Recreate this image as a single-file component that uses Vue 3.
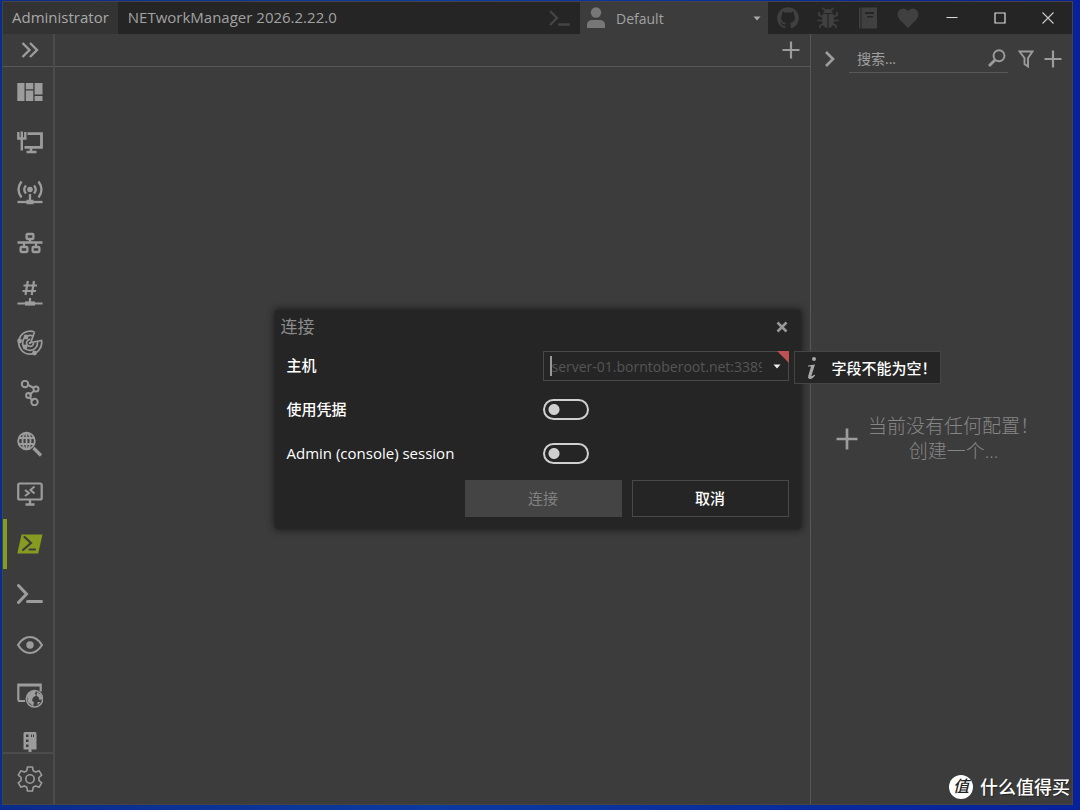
<script setup>
import { ref } from 'vue'

const active = ref('powershell')
const host = ref('')
const search = ref('')
const useCredentials = ref(false)
const adminSession = ref(false)

const tools = [
  { id: 'dashboard', label: 'Dashboard' },
  { id: 'interface', label: 'Network Interface' },
  { id: 'wifi', label: 'WiFi' },
  { id: 'ipscanner', label: 'IP Scanner' },
  { id: 'portscanner', label: 'Port Scanner' },
  { id: 'ping', label: 'Ping Monitor' },
  { id: 'traceroute', label: 'Traceroute' },
  { id: 'dns', label: 'DNS Lookup' },
  { id: 'rdp', label: 'Remote Desktop' },
  { id: 'powershell', label: 'PowerShell' },
  { id: 'putty', label: 'PuTTY' },
  { id: 'vnc', label: 'TigerVNC' },
  { id: 'web', label: 'Web Console' },
  { id: 'snmp', label: 'SNMP' }
]
</script>

<template>
  <div class="desktop">
    <div class="window">
      <header class="titlebar">
        <span class="admin">Administrator</span>
        <h1 class="title">NETworkManager 2026.2.22.0</h1>
        <button class="tb-btn" aria-label="Console">
          <svg width="24" height="24" viewBox="0 0 24 24" class="line"><path d="M2 5l7 7-7 7" stroke-width="2.4" /><path d="M10 18.500h12" stroke-width="2.400" /></svg>
        </button>
        <button class="profile">
          <svg width="20" height="24" viewBox="0 0 20 24" fill="#777"><circle cx="10" cy="6.500" r="5.200" /><path d="M1 22v-3q0-5 6-5h6q6 0 6 5v3z" /></svg>
          <span>Default</span>
          <svg class="arrow" width="8" height="5" viewBox="0 0 8 5" fill="#aaa"><path d="M0.500 0.500h7L4 4.500z" /></svg>
        </button>
        <a class="tb-btn" href="#" aria-label="GitHub">
          <svg width="26" height="26" viewBox="0 0 24 24" fill="currentColor"><path d="M12,2A10,10 0 0,0 2,12C2,16.42 4.87,20.17 8.84,21.5C9.34,21.58 9.5,21.27 9.5,21C9.5,20.77 9.5,20.14 9.5,19.31C6.73,19.91 6.14,17.97 6.14,17.97C5.68,16.81 5.03,16.5 5.03,16.5C4.12,15.88 5.1,15.9 5.1,15.9C6.1,15.97 6.63,16.93 6.63,16.93C7.5,18.45 8.97,18 9.54,17.76C9.63,17.11 9.89,16.67 10.17,16.42C7.95,16.17 5.62,15.31 5.62,11.5C5.62,10.39 6,9.5 6.65,8.79C6.55,8.54 6.2,7.5 6.75,6.15C6.75,6.15 7.59,5.88 9.5,7.17C10.29,6.95 11.15,6.84 12,6.84C12.85,6.84 13.71,6.95 14.5,7.17C16.41,5.88 17.25,6.15 17.25,6.15C17.8,7.5 17.45,8.54 17.35,8.79C18,9.5 18.38,10.39 18.38,11.5C18.38,15.32 16.04,16.16 13.81,16.41C14.17,16.72 14.5,17.33 14.5,18.26C14.5,19.6 14.5,20.68 14.5,21C14.5,21.27 14.66,21.59 15.17,21.5C19.14,20.16 22,16.42 22,12A10,10 0 0,0 12,2Z" /></svg>
        </a>
        <a class="tb-btn" href="#" aria-label="Report a bug">
          <svg width="22" height="22" viewBox="0 0 22 22"><path d="M6.500 6a4.500 4 0 0 1 9 0z" fill="currentColor" /><path d="M5.500 7h4.900v14.300Q5 20 5 14zM16.500 7h-4.900v14.300Q17 20 17 14z" fill="currentColor" /><path d="M8 3L5.500 1M14 3l2.500-2M5.500 10L2 8V5M5 13.500H0.500M6 17l-3 1.500V21M16.500 10L20 8V5M17 13.500h4.500M16 17l3 1.500V21" fill="none" stroke="currentColor" stroke-width="1.700" /></svg>
        </a>
        <a class="tb-btn" href="#" aria-label="Documentation">
          <svg width="22" height="22" viewBox="0 0 22 22" fill="currentColor"><path d="M2 0.500h1.500v21H2z" /><path fill-rule="evenodd" d="M4.500 0.500H20v21H4.500zM8 5v2h9V5zM10 9v1.500h6V9z" /></svg>
        </a>
        <a class="tb-btn" href="#" aria-label="Sponsor">
          <svg width="22" height="22" viewBox="0 0 22 22" fill="currentColor"><path d="M11 21L3 13C-1 9 0 2 6 1.500Q9 1.300 11 4Q13 1.300 16 1.500C22 2 23 9 19 13z" /></svg>
        </a>
        <button class="win-btn" aria-label="Minimize"><svg width="12" height="12" viewBox="0 0 12 12"><path d="M0.500 5.500h11" stroke="#ddd" /></svg></button>
        <button class="win-btn" aria-label="Maximize"><svg width="12" height="12" viewBox="0 0 12 12"><path d="M1 1h10v10H1z" fill="none" stroke="#ddd" stroke-width="1.200" /></svg></button>
        <button class="win-btn" aria-label="Close"><svg width="12" height="12" viewBox="0 0 12 12"><path d="M0.500 0.500l11 11M11.500 0.500l-11 11" stroke="#ccc" stroke-width="1.100" /></svg></button>
      </header>

      <div class="body">
        <nav class="sidebar">
          <button class="expand" aria-label="Expand">
            <svg width="20" height="18" viewBox="0 0 20 18" class="line"><path d="M2.500 2l7 7-7 7M10 2l7 7-7 7" stroke-width="2.400" /></svg>
          </button>
          <div class="tools">
            <button v-for="t in tools" :key="t.id" class="tool" :class="{ active: active === t.id }" :aria-label="t.label" @click="active = t.id">
              <svg width="26" height="26" viewBox="0 0 26 26" class="icon">
                <g v-if="t.id === 'dashboard'" fill="currentColor"><path d="M0.300 4h7.200v18H0.300zM8.800 4h7.500v6.200H8.800zM8.800 11.500h7.500V22H8.800zM17.600 4h7.900v11.500h-7.900zM17.600 17h7.900v5h-7.900z" /></g>
                <g v-else-if="t.id === 'interface'"><path d="M1.300 3v6.500h7V3M4.800 2.500v19" stroke-width="2.400" /><path d="M10.500 4.700h14v13.600H7.500" stroke-width="2.800" /><path d="M14 19v3M9.500 23h10" stroke-width="2.600" /></g>
                <g v-else-if="t.id === 'wifi'"><circle cx="13" cy="10.500" r="2.800" fill="currentColor" stroke="none" /><path d="M9 6.500q-3.500 4 0 8M17 6.500q3.500 4 0 8M4.500 2.500q-6 8 0 16M21.500 2.500q6 8 0 16M13 15v8" stroke-width="2.300" /><path d="M0.500 23H25.500" stroke-width="2.300" /><path d="M9.500 23h7" stroke-width="4.500" /></g>
                <g v-else-if="t.id === 'ipscanner'"><path d="M0.500 12.500h25M13 9v4M7 13v4M19 13v4" stroke-width="2.300" /><rect x="9.600" y="4" width="6.800" height="5" rx="1" stroke-width="2.300" /><rect x="3.600" y="17" width="6.800" height="5" rx="1" stroke-width="2.300" /><rect x="15.600" y="17" width="6.800" height="5" rx="1" stroke-width="2.300" /></g>
                <g v-else-if="t.id === 'portscanner'"><path d="M10.800 1L8.500 15M17 1l-2.300 14M6.500 5.500h13.500M5.500 11H19" stroke-width="2.200" /><path d="M13 18v5M0.500 23.500h25" stroke-width="2.200" /><path d="M8 23.500h10" stroke-width="4.200" /></g>
                <g v-else-if="t.id === 'ping'" stroke-width="1.700"><path d="M17.500 2A11.500 11.500 0 1 0 24.500 10.500L14 12.500M17.500 2L14 12" /><path d="M16 6a7.500 7.500 0 1 0 4.500 6M13.500 9.500a3.500 3.500 0 1 0 3 3" /><g fill="currentColor" stroke="none"><circle cx="2.600" cy="11" r="2.400" /><circle cx="9" cy="7" r="2.400" /><circle cx="8" cy="17" r="2.400" /><circle cx="17.500" cy="23" r="2.400" /><circle cx="13" cy="13" r="1.200" /></g></g>
                <g v-else-if="t.id === 'traceroute'" stroke-width="2"><path d="M11 5l6 3M17 11l-5 4M13 18l3 3" /><circle cx="8" cy="4" r="3.200" /><circle cx="19" cy="9" r="2.500" /><circle cx="11.500" cy="15.500" r="2.400" /><circle cx="17.500" cy="22" r="3.200" /></g>
                <g v-else-if="t.id === 'dns'" stroke-width="1.900"><circle cx="9.500" cy="10" r="8.300" /><ellipse cx="9.500" cy="10" rx="4" ry="8.300" /><path d="M2 7h15M2 13h15M9.500 2v16" /><path d="M16.500 17l7.500 7.500" stroke-width="3.200" /></g>
                <g v-else-if="t.id === 'rdp'"><rect x="1.200" y="2.500" width="23.500" height="16" rx="1.500" stroke-width="2.200" /><path d="M13 19v4M8.500 23.500h9" stroke-width="2.400" /><path d="M8 9l4 3-4 3M17.500 5.500l-4 3.500 4 3.500" stroke-width="2" /></g>
                <g v-else-if="t.id === 'powershell'"><path d="M4.500 3.500h21l-4.300 19H0.300z" fill="currentColor" stroke="none" /><path d="M7.500 6l6.500 6-8 7M12.500 18.500h5.500" stroke="#3c3c3c" stroke-width="2.200" stroke-linecap="round" /></g>
                <g v-else-if="t.id === 'putty'"><path d="M1.500 4.500l8 8.500-8 8.500M10.500 20.500h14" stroke-width="3" stroke-linecap="round" /></g>
                <g v-else-if="t.id === 'vnc'"><path d="M1 13q5-8 12-8t12 8q-5 8-12 8T1 13z" stroke-width="2.100" /><circle cx="13" cy="13" r="3.700" fill="currentColor" stroke="none" /></g>
                <g v-else-if="t.id === 'web'"><path d="M1.300 18.500V2.500h22.400v7M1 3.500h23M1 19h7" stroke-width="2.200" /><circle cx="17.500" cy="16.800" r="8.200" stroke-width="1.500" fill="#3c3c3c" /><path d="M10 13q3-4 7-4.500l2 1-1 2 1 2-3 2-1 3 2 2-1 4-3-3-2-1zM20 10l4 3 1.500 4-3 1-1-3-2-1zM20.500 20l3 0-3 3z" fill="currentColor" stroke="none" /></g>
                <g v-else-if="t.id === 'snmp'"><path fill="currentColor" stroke="none" fill-rule="evenodd" d="M8 0h10q1.500 0 1.500 1.500v16h-13v-16Q6.500 0 8 0zM9 2.500v2.500h2.500V2.500zM9 7.500v2.500h2.500V7.500zM9 12.500v2.500h2.500V12.500zM14 2.500v2.500h1V2.500zM16 2.500v2.500h1V2.500z" /><path d="M13 17v6" stroke-width="3" /></g>
              </svg>
            </button>
          </div>
          <button class="settings" aria-label="Settings">
            <svg width="26" height="26" viewBox="0 0 26 26" class="icon"><path d="M10.500 1h5l0.700 3.700 2.500 1.400 3.500-1.300 2.500 4.300-2.800 2.400v3l2.800 2.400-2.500 4.300-3.500-1.300-2.500 1.400-0.700 3.700h-5l-0.700-3.700-2.500-1.400-3.500 1.300-2.500-4.300 2.800-2.400v-3L1.300 9.100l2.500-4.300 3.500 1.300 2.500-1.400z" stroke-width="1.600" stroke-linejoin="round" /><circle cx="13" cy="13" r="4.200" stroke-width="1.600" /></svg>
          </button>
        </nav>

        <main class="content">
          <div class="tabs">
            <button aria-label="Add tab"><svg width="18" height="18" viewBox="0 0 18 18" class="line"><path d="M9 0.500v17M0.500 9h17" stroke-width="2.200" /></svg></button>
          </div>
        </main>

        <aside class="profiles">
          <div class="search-row">
            <button aria-label="Collapse"><svg width="12" height="18" viewBox="0 0 12 18" class="line"><path d="M2 2l7 7-7 7" stroke-width="2.700" /></svg></button>
            <div class="search">
              <input v-model="search" type="text" placeholder="搜索..." aria-label="搜索" />
              <svg width="18" height="18" viewBox="0 0 18 18" class="line"><circle cx="11" cy="6.800" r="5.500" stroke-width="1.900" /><path d="M7 11l-6 6" stroke-width="2.800" /></svg>
            </div>
            <button aria-label="Filter"><svg width="16" height="18" viewBox="0 0 16 18" class="line"><path d="M1.500 1.500h13L10 8v8.500L6.500 14V8z" stroke-width="1.900" /></svg></button>
            <button aria-label="Add profile"><svg width="18" height="18" viewBox="0 0 18 18" class="line"><path d="M9 0.500v17M0.500 9h17" stroke-width="2.200" /></svg></button>
          </div>
          <button class="empty">
            <svg width="22" height="22" viewBox="0 0 22 22" class="line"><path d="M11 0.500v21M0.500 11h21" stroke-width="2.700" /></svg>
            <span>当前没有任何配置！<br />创建一个...</span>
          </button>
        </aside>

        <div class="overlay">
          <form class="dialog" role="dialog" aria-labelledby="dlg-title" @submit.prevent>
            <div class="dialog-head">
              <h2 id="dlg-title">连接</h2>
              <button type="button" aria-label="Close dialog"><svg width="12" height="12" viewBox="0 0 12 12"><path d="M1.500 1.500l9 9M10.500 1.500l-9 9" stroke="#999" stroke-width="2.500" /></svg></button>
            </div>
            <div class="row host-row">
              <label for="host">主机</label>
              <div class="combo">
                <span class="caret"></span>
                <input id="host" v-model="host" type="text" placeholder="server-01.borntoberoot.net:3389" />
                <button type="button" aria-label="History"><svg width="8" height="5" viewBox="0 0 8 5" fill="#eee"><path d="M0.500 0.500h7L4 4.500z" /></svg></button>
                <span class="corner"></span>
                <div class="tip" role="tooltip">
                  <svg width="14" height="24" viewBox="0 0 14 24" fill="#a8a8a8"><circle cx="9" cy="3" r="2" /><path d="M3 9.500l7-1-3.500 11q-0.500 2 3-1l0.700 0.700Q7 23.500 4.500 23q-2-0.500-1.300-3L6 10.500l-3 0z" /></svg>
                  <span>字段不能为空！</span>
                </div>
              </div>
            </div>
            <div class="row">
              <label for="cred">使用凭据</label>
              <input id="cred" v-model="useCredentials" type="checkbox" class="switch" />
            </div>
            <div class="row">
              <label for="adm">Admin (console) session</label>
              <input id="adm" v-model="adminSession" type="checkbox" class="switch" />
            </div>
            <div class="actions">
              <button type="submit" disabled>连接</button>
              <button type="button" class="cancel">取消</button>
            </div>
          </form>
        </div>
      </div>
    </div>
    <div class="watermark"><span class="badge">值</span><span>什么值得买</span></div>
  </div>
</template>

<style>
body {
  margin: 0;
}
</style>

<style scoped>
.desktop {
  position: relative;
  box-sizing: border-box;
  min-height: 100vh;
  padding: 1px 7px 5px 2px;
  display: flex;
  background: linear-gradient(90deg, #0a2c8c, #0b3aa0 40%, #06219a);
  font-family: "Open Sans", "Noto Sans CJK SC", sans-serif;
  font-size: 14px;
  color: #fff;
}
.desktop * {
  box-sizing: border-box;
}
.window {
  flex: 1;
  display: flex;
  flex-direction: column;
  min-width: 0;
  background: #3c3c3c;
  border: 1px solid #444;
}
button {
  font: inherit;
  color: inherit;
  background: none;
  border: 0;
  padding: 0;
  display: flex;
  align-items: center;
  justify-content: center;
}
svg {
  flex: none;
  display: block;
}
.line {
  fill: none;
  stroke: #9c9c9c;
}
.titlebar {
  display: flex;
  height: 32px;
  background: #252525;
  color: #a2a2a2;
}
.admin {
  padding: 0 9px;
  line-height: 30px;
  font-size: 15px;
  background: #333;
  color: #a8a8a8;
}
.title {
  flex: 1;
  margin: 0;
  padding-left: 10px;
  font-size: 15px;
  font-weight: 400;
  line-height: 31px;
  white-space: nowrap;
}
.tb-btn {
  width: 40px;
  display: flex;
  align-items: center;
  justify-content: center;
  color: #404040;
}
.tb-btn .line {
  stroke: #444;
}
.profile {
  width: 188px;
  justify-content: flex-start;
  gap: 10px;
  padding: 0 7px 0 6px;
  background: #3c3c3c;
  color: #a2a2a2;
}
.arrow {
  margin-left: auto;
}
.win-btn {
  width: 48px;
}
.body {
  position: relative;
  flex: 1;
  display: flex;
}
.sidebar {
  width: 52px;
  display: flex;
  flex-direction: column;
  border-right: 2px solid #4b4b4b;
}
.expand {
  height: 33px;
  padding-left: 3px;
  border-bottom: 1px solid #585858;
}
.tools {
  flex: 1 1 0;
  min-height: 0;
  overflow: hidden;
}
.tool {
  width: 100%;
  height: 50px;
  padding-right: 1px;
  border-left: 4px solid transparent;
  color: #9c9c9c;
}
.tool:nth-child(4n) {
  margin-top: 1px;
}
.tool.active {
  color: #879b21;
  border-left-color: #879b21;
}
.icon {
  fill: none;
  stroke: currentColor;
}
.tool .icon g[fill] {
  stroke: none;
}
.settings {
  height: 52px;
  padding-left: 3px;
  border-top: 2px solid #4b4b4b;
  color: #9c9c9c;
}
.content {
  flex: 1;
  min-width: 0;
}
.tabs {
  height: 33px;
  display: flex;
  justify-content: flex-end;
  padding-right: 10px;
  border-bottom: 1px solid #585858;
}
.profiles {
  width: 262px;
  display: flex;
  flex-direction: column;
  border-left: 1px solid #585858;
}
.search-row {
  height: 39px;
  display: flex;
  gap: 10px;
  padding: 10px 10px 0 13px;
}
.search-row > button:first-child {
  margin-right: 3px;
}
.search {
  flex: 1;
  min-width: 0;
  display: flex;
  align-items: center;
  padding: 0 2px 0 8px;
  border-bottom: 1px solid #585858;
}
.search input,
.combo input {
  flex: 1;
  min-width: 0;
  padding: 0;
  border: 0;
  outline: 0;
  background: none;
  color: #fff;
  font: inherit;
}
.search input::placeholder {
  color: #a0a0a0;
  opacity: 1;
}
.empty {
  flex: 1;
  gap: 10px;
  padding-right: 8px;
  color: #868686;
  font-size: 19px;
  font-weight: 300;
  line-height: 25px;
}
.overlay {
  position: absolute;
  inset: 0;
  display: flex;
  align-items: center;
  justify-content: center;
}
.dialog {
  width: 526px;
  padding: 0 12px 12px;
  border-radius: 3px;
  background: #252525;
  box-shadow: 0 0 7px 1px #1c1c1c;
}
.dialog-head {
  display: flex;
  justify-content: space-between;
  height: 35px;
  padding-right: 1px;
  margin-left: -6px;
}
.dialog-head h2 {
  margin: 0;
  font-size: 17px;
  font-weight: 400;
  line-height: 33px;
  color: #8c8c8c;
}
.row {
  display: grid;
  grid-template-columns: 256px 1fr;
  align-items: center;
  height: 44px;
  font-weight: 500;
}
.host-row {
  height: 43px;
}
.row label {
  font-size: 15px;
  line-height: 22px;
  padding-bottom: 2px;
}
.combo {
  position: relative;
  display: flex;
  align-items: center;
  height: 30px;
  padding-left: 6px;
  border: 1px solid #484848;
  font-weight: 400;
}
.combo input::placeholder {
  color: #555;
  opacity: 1;
}
.caret {
  width: 2px;
  height: 20px;
  background: #999;
}
.combo button {
  width: 26px;
  height: 28px;
  padding-left: 4px;
}
.corner {
  position: absolute;
  top: -1px;
  right: -1px;
  border-top: 12px solid #bd5153;
  border-left: 12px solid transparent;
}
.tip {
  position: absolute;
  top: -1px;
  left: calc(100% + 6px);
  display: flex;
  align-items: center;
  gap: 13px;
  width: 147px;
  height: 33px;
  padding-left: 10px;
  border: 1px solid #454545;
  background: #252525;
  font-size: 15px;
  font-weight: 500;
  line-height: 20px;
  white-space: nowrap;
}
.switch {
  appearance: none;
  width: 46px;
  height: 21px;
  margin: 0;
  border: 2px solid #d0d0d0;
  border-radius: 11px;
  background: radial-gradient(circle at 9px 50%, #d0d0d0 5px, transparent 6px);
}
.actions {
  display: grid;
  grid-template-columns: 157px 157px;
  justify-content: end;
  gap: 10px;
  padding-top: 4px;
}
.actions button {
  height: 37px;
  padding-bottom: 2px;
  background: #444;
  color: #808080;
  font-size: 15px;
}
.actions .cancel {
  border: 1px solid #484848;
  background: #252525;
  color: #fff;
  font-weight: 500;
}
.watermark {
  position: absolute;
  right: 10px;
  bottom: 10px;
  display: flex;
  align-items: center;
  gap: 7px;
  font-size: 18px;
  font-weight: 500;
  line-height: 26px;
  text-shadow: 1px 1px 1px #222;
}
.badge {
  width: 24px;
  height: 24px;
  border-radius: 50%;
  background: #fff;
  color: #222;
  font-size: 16px;
  font-style: italic;
  line-height: 23px;
  text-align: center;
  text-shadow: none;
}
</style>
